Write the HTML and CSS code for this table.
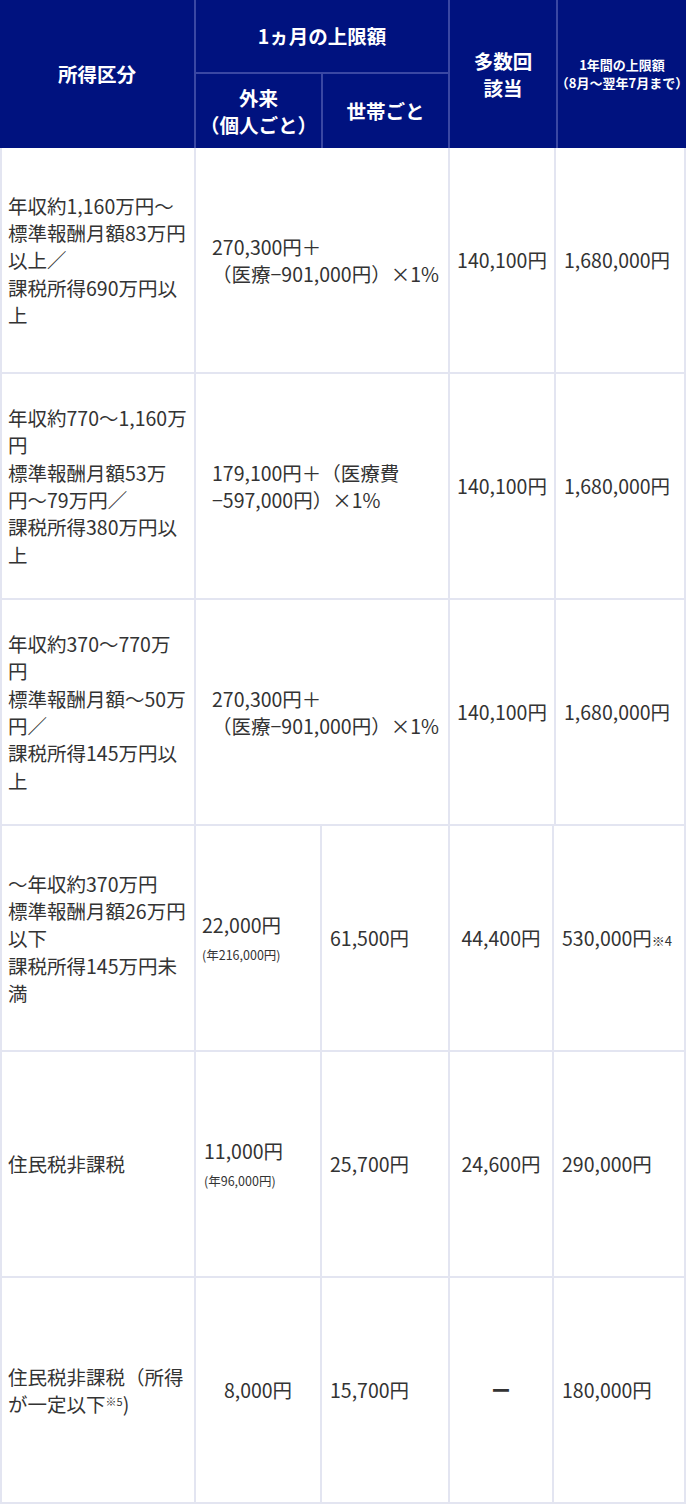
FILE: index.html
```html
<!DOCTYPE html>
<html lang="ja">
<head>
<meta charset="utf-8">
<title>高額療養費の上限額</title>
<link rel="stylesheet" href="styles.css">
</head>
<body>
<div class="limit-table">
  <div class="head">
    <div class="h h-income">所得区分</div>
    <div class="h h-month">1ヵ月の上限額</div>
    <div class="h h-multi">多数回<br>該当</div>
    <div class="h h-year"><span>1年間の上限額<br>（8月〜翌年7月まで）</span></div>
    <div class="h h-out">外来<br>（個人ごと）</div>
    <div class="h h-house">世帯ごと</div>
  </div>

  <div class="rows rows-a">
    <div class="c c-income"><span>年収約1,160万円〜<br>標準報酬月額83万円<br>以上／<br>課税所得690万円以<br>上</span></div>
    <div class="c c-formula"><span>270,300円＋<br>（医療−901,000円）×1%</span></div>
    <div class="c c-multi"><span>140,100円</span></div>
    <div class="c c-year"><span>1,680,000円</span></div>

    <div class="c c-income"><span>年収約770〜1,160万<br>円<br>標準報酬月額53万<br>円〜79万円／<br>課税所得380万円以<br>上</span></div>
    <div class="c c-formula"><span>179,100円＋（医療費<br>−597,000円）×1%</span></div>
    <div class="c c-multi"><span>140,100円</span></div>
    <div class="c c-year"><span>1,680,000円</span></div>

    <div class="c c-income"><span>年収約370〜770万<br>円<br>標準報酬月額〜50万<br>円／<br>課税所得145万円以<br>上</span></div>
    <div class="c c-formula"><span>270,300円＋<br>（医療−901,000円）×1%</span></div>
    <div class="c c-multi"><span>140,100円</span></div>
    <div class="c c-year"><span>1,680,000円</span></div>
  </div>

  <div class="rows rows-b">
    <div class="c c-income"><span>〜年収約370万円<br>標準報酬月額26万円<br>以下<br>課税所得145万円未<br>満</span></div>
    <div class="c c-out"><span>22,000円<br><small class="note">(年216,000円)</small></span></div>
    <div class="c c-house"><span>61,500円</span></div>
    <div class="c c-multi"><span>44,400円</span></div>
    <div class="c c-year"><span>530,000円<small class="ref">※4</small></span></div>

    <div class="c c-income"><span>住民税非課税</span></div>
    <div class="c c-out c-out-wide"><span>11,000円<br><small class="note">(年96,000円)</small></span></div>
    <div class="c c-house"><span>25,700円</span></div>
    <div class="c c-multi"><span>24,600円</span></div>
    <div class="c c-year"><span>290,000円</span></div>

    <div class="c c-income"><span>住民税非課税（所得<br>が一定以下<sup class="sup">※5</sup>)</span></div>
    <div class="c c-out c-center"><span>8,000円</span></div>
    <div class="c c-house"><span>15,700円</span></div>
    <div class="c c-multi c-dash"><span>ー</span></div>
    <div class="c c-year"><span>180,000円</span></div>
  </div>
</div>
</body>
</html>
```

FILE: styles.css
```css
* { box-sizing: border-box; }

html, body {
  margin: 0;
  padding: 0;
  background: #ffffff;
}

body {
  font-family: "Noto Sans CJK JP", "Noto Sans", sans-serif;
  color: #333333;
  width: 686px;
}

.limit-table {
  width: 686px;
}

/* ---------- header ---------- */
.head {
  display: grid;
  grid-template-columns: 194px 125px 125px 106px 128px;
  grid-template-rows: 72px 74px;
  gap: 2px;
  background: #3a47a3;
}

.h {
  background: #00127f;
  color: #ffffff;
  font-weight: 700;
  font-size: 19.5px;
  line-height: 1.4;
  display: flex;
  align-items: center;
  justify-content: center;
  text-align: center;
}

.h-income { grid-column: 1; grid-row: 1 / 3; }
.h-month  { grid-column: 2 / 4; grid-row: 1; }
.h-multi  { grid-column: 4; grid-row: 1 / 3; }
.h-year   { grid-column: 5; grid-row: 1 / 3; font-size: 13px; line-height: 1.4; white-space: nowrap; }
.h-out    { grid-column: 2; grid-row: 2; }
.h-house  { grid-column: 3; grid-row: 2; }

/* ---------- body ---------- */
.rows {
  display: grid;
  grid-auto-rows: 224px;
  gap: 2px;
  padding: 0 2px 2px;
  background: #e3e5f1;
}

.rows-a { grid-template-columns: 192px 252px 104px 128px; }
.rows-b { grid-template-columns: 192px 124px 126px 102px 130px; }

.c {
  background: #ffffff;
  display: flex;
  align-items: center;
  font-size: 19.5px;
  line-height: 1.4;
  white-space: nowrap;
}

.c-income  { padding: 0 4px 0 6px; }
.c-formula { padding: 0 4px 0 16px; }
.c-multi   { justify-content: center; }
.c-year    { padding: 0 4px 0 8px; }
.c-house   { padding: 0 4px 0 8px; }
.c-out     { padding: 0 4px 0 6px; }
.c-out-wide { padding-left: 8px; }
.c-center  { justify-content: center; padding: 0; }

.note {
  font-size: 12.5px;
}

.ref {
  font-size: 13px;
}

.sup {
  font-size: 11px;
  vertical-align: 6px;
  line-height: 0;
}

.c-dash {
  font-weight: 700;
}
```
